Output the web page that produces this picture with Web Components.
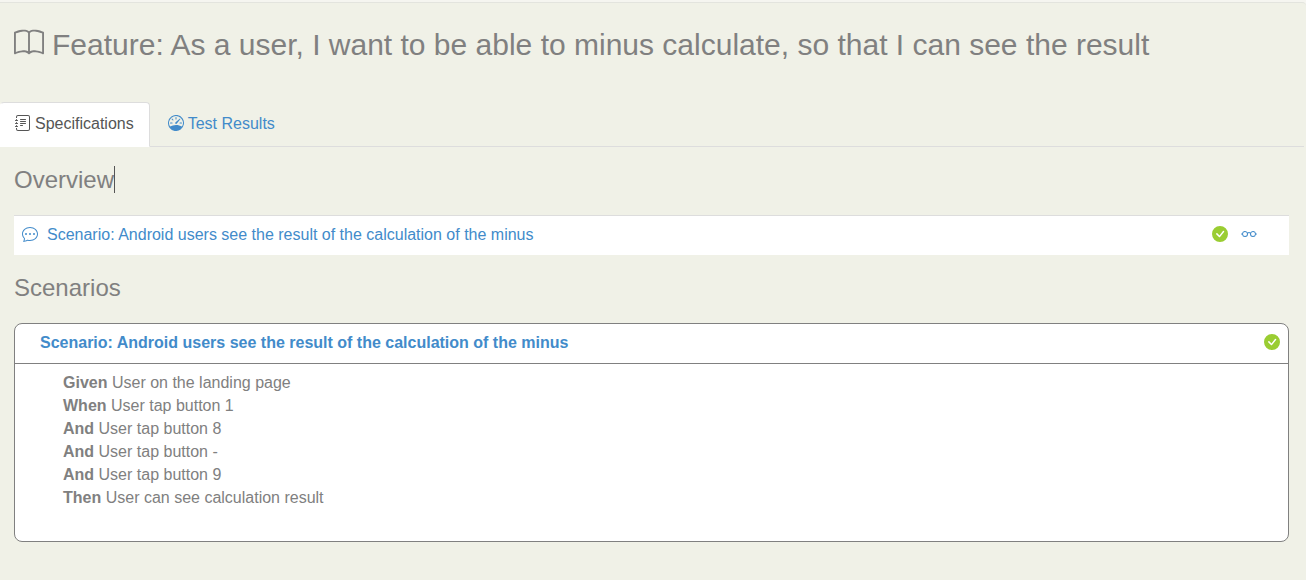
<!DOCTYPE html>
<html lang="en">
<head>
<meta charset="utf-8">
<meta name="viewport" content="width=device-width, initial-scale=1">
<title>Feature report</title>
<style>
  :root {
    --page: #f0f1e7;
    --line: #dddddd;
    --ink: #808080;
    --link: #428bca;
    --pass: #9acd32;
  }
  html { background: #f5f5f0; }
  body {
    margin: 0;
    padding-top: 2px;
    color: var(--ink);
    font: 16px/23px "Liberation Sans", Arial, sans-serif;
  }
</style>
</head>
<body>
<feature-report></feature-report>

<script>
const ICONS = {
  book: '<path d="M1 2.828c.885-.37 2.154-.769 3.388-.893 1.33-.134 2.458.063 3.112.752v9.746c-.935-.53-2.12-.603-3.213-.493-1.18.12-2.37.461-3.287.811V2.828zm7.5-.141c.654-.689 1.782-.886 3.112-.752 1.234.124 2.503.523 3.388.893v9.923c-.918-.35-2.107-.692-3.287-.81-1.094-.111-2.278-.039-3.213.492V2.687zM8 1.783C7.015.936 5.587.81 4.287.94c-1.514.153-3.042.672-3.994 1.105A.5.5 0 0 0 0 2.5v11a.5.5 0 0 0 .707.455c.882-.4 2.303-.881 3.68-1.02 1.409-.142 2.59.087 3.223.877a.5.5 0 0 0 .78 0c.633-.79 1.814-1.019 3.222-.877 1.378.139 2.8.62 3.681 1.02A.5.5 0 0 0 16 13.5v-11a.5.5 0 0 0-.293-.455c-.952-.433-2.48-.952-3.994-1.105C10.413.809 8.985.936 8 1.783z"/>',
  journal: '<path d="M5 10.5a.5.5 0 0 1 .5-.5h2a.5.5 0 0 1 0 1h-2a.5.5 0 0 1-.5-.5m0-2a.5.5 0 0 1 .5-.5h5a.5.5 0 0 1 0 1h-5a.5.5 0 0 1-.5-.5m0-2a.5.5 0 0 1 .5-.5h5a.5.5 0 0 1 0 1h-5a.5.5 0 0 1-.5-.5m0-2a.5.5 0 0 1 .5-.5h5a.5.5 0 0 1 0 1h-5a.5.5 0 0 1-.5-.5"/><path d="M3 0h10a2 2 0 0 1 2 2v12a2 2 0 0 1-2 2H3a2 2 0 0 1-2-2v-1h1v1a1 1 0 0 0 1 1h10a1 1 0 0 0 1-1V2a1 1 0 0 0-1-1H3a1 1 0 0 0-1 1v1H1V2a2 2 0 0 1 2-2"/><path d="M1 5v-.5a.5.5 0 0 1 1 0V5h.5a.5.5 0 0 1 0 1h-2a.5.5 0 0 1 0-1zm0 3v-.5a.5.5 0 0 1 1 0V8h.5a.5.5 0 0 1 0 1h-2a.5.5 0 0 1 0-1zm0 3v-.5a.5.5 0 0 1 1 0v.5h.5a.5.5 0 0 1 0 1h-2a.5.5 0 0 1 0-1z"/>',
  gauge: '<path d="M8 2a.5.5 0 0 1 .5.5V4a.5.5 0 0 1-1 0V2.5A.5.5 0 0 1 8 2M3.732 3.732a.5.5 0 0 1 .707 0l.915.914a.5.5 0 1 1-.708.708l-.914-.915a.5.5 0 0 1 0-.707M2 8a.5.5 0 0 1 .5-.5h1.586a.5.5 0 0 1 0 1H2.5A.5.5 0 0 1 2 8m9.5 0a.5.5 0 0 1 .5-.5h1.5a.5.5 0 0 1 0 1H12a.5.5 0 0 1-.5-.5m.754-4.246a.39.39 0 0 0-.527-.02L7.547 7.31A.91.91 0 1 0 8.85 8.569l3.434-4.297a.39.39 0 0 0-.029-.518z"/><path fill-rule="evenodd" d="M6.664 15.889A8 8 0 1 1 9.336.11a8 8 0 0 1-2.672 15.78zm-4.665-4.283A11.95 11.95 0 0 1 8 10c2.186 0 4.236.585 6.001 1.606a7 7 0 1 0-12.002 0"/>',
  chat: '<path d="M5 8a1 1 0 1 1-2 0 1 1 0 0 1 2 0m4 0a1 1 0 1 1-2 0 1 1 0 0 1 2 0m3 1a1 1 0 1 0 0-2 1 1 0 0 0 0 2"/><path d="m2.165 15.803.02-.004c1.83-.363 2.948-.842 3.468-1.105A9 9 0 0 0 8 15c4.418 0 8-3.134 8-7s-3.582-7-8-7-8 3.134-8 7c0 1.76.743 3.37 1.97 4.6a10.4 10.4 0 0 1-.524 2.318l-.003.011a11 11 0 0 1-.244.637c-.079.186.074.394.273.362a22 22 0 0 0 .693-.125m.8-3.108a1 1 0 0 0-.287-.801C1.618 10.83 1 9.468 1 8c0-3.192 3.004-6 7-6s7 2.808 7 6-3.004 6-7 6a8 8 0 0 1-2.088-.272 1 1 0 0 0-.711.074c-.387.196-1.24.57-2.634.893a11 11 0 0 0 .398-2"/>',
  check: '<path d="M16 8A8 8 0 1 1 0 8a8 8 0 0 1 16 0m-3.97-3.03a.75.75 0 0 0-1.08.022L7.477 9.417 5.384 7.323a.75.75 0 0 0-1.06 1.06L6.97 11.03a.75.75 0 0 0 1.079-.02l3.992-4.99a.75.75 0 0 0-.01-1.05z"/>',
  glasses: '<path d="M4 6a2 2 0 1 1 0 4 2 2 0 0 1 0-4m2.625.547a3 3 0 0 0-5.584.953H.5a.5.5 0 0 0 0 1h.541A3 3 0 0 0 7 8a1 1 0 0 1 2 0 3 3 0 0 0 5.959.5h.541a.5.5 0 0 0 0-1h-.541a3 3 0 0 0-5.584-.953A2 2 0 0 0 8 6c-.532 0-1.016.208-1.375.547M14 8a2 2 0 1 1-4 0 2 2 0 0 1 4 0"/>'
};

class AppIcon extends HTMLElement {
  connectedCallback() {
    if (this.shadowRoot) return;
    this.attachShadow({ mode: "open" }).innerHTML = `
      <style>
        :host { display: block; flex: none; width: 16px; height: 16px; padding-top: 3px; }
        svg { display: block; width: 100%; height: 100%; fill: currentColor; }
      </style>
      <svg viewBox="0 0 16 16" aria-hidden="true">${ICONS[this.getAttribute("name")]}</svg>`;
  }
}

class FeatureTitle extends HTMLElement {
  connectedCallback() {
    this.attachShadow({ mode: "open" }).innerHTML = `
      <style>
        :host { display: block; padding: 24px 14px 40px; }
        h1 { display: flex; gap: 8px; margin: 0; font-size: 30px; line-height: 35px; font-weight: 400; }
        app-icon { width: 30px; height: 30px; padding-top: 1px; }
      </style>
      <h1><app-icon name="book"></app-icon><span><slot></slot></span></h1>`;
  }
}

class TabBar extends HTMLElement {
  connectedCallback() {
    this.attachShadow({ mode: "open" }).innerHTML = `
      <style>
        :host { display: block; margin-right: 2px; border-bottom: 1px solid var(--line); }
        nav { display: flex; gap: 2px; margin-bottom: -1px; }
      </style>
      <nav aria-label="Report sections"><slot></slot></nav>`;
  }
}

class TabLink extends HTMLElement {
  connectedCallback() {
    this.attachShadow({ mode: "open" }).innerHTML = `
      <style>
        :host { display: block; }
        a {
          display: flex; align-items: flex-start; gap: 4px; padding: 9px 15px 11px;
          border: 1px solid transparent; border-radius: 4px 4px 0 0;
          color: var(--link); text-decoration: none;
        }
        :host([active]) a {
          padding-left: 14px; background: #fff; color: #555;
          border-color: var(--line); border-bottom-color: #fff; border-left-color: #fff;
        }
      </style>
      <a href="${this.getAttribute("href")}"><app-icon name="${this.getAttribute("icon")}"></app-icon><span><slot></slot></span></a>`;
  }
}

class SectionHeading extends HTMLElement {
  connectedCallback() {
    this.attachShadow({ mode: "open" }).innerHTML = `
      <style>
        :host { display: block; }
        h2 { display: flex; margin: 0; font-size: 24px; line-height: 27px; font-weight: 400; }
        :host([caret]) h2::after { content: ""; width: 1px; background: #555; }
      </style>
      <h2><slot></slot></h2>`;
  }
}

class ScenarioOverview extends HTMLElement {
  connectedCallback() {
    this.attachShadow({ mode: "open" }).innerHTML = `
      <style>
        :host { display: block; }
        table { width: 100%; border-collapse: collapse; background: #fff; }
        td { padding: 7px 8px 9px; border-top: 1px solid var(--line); }
        .actions { width: 69px; }
        .row { display: flex; align-items: flex-start; gap: 9px; min-height: 23px; }
        .actions .row { gap: 13px; }
        a { color: var(--link); text-decoration: none; }
        .pass { color: var(--pass); }
      </style>
      <table>
        <tr>
          <td><a class="row" href="#scenario"><app-icon name="chat"></app-icon><span><slot></slot></span></a></td>
          <td class="actions"><div class="row">
            <app-icon class="pass" name="check" role="img" aria-label="Passed"></app-icon>
            <a href="#evidence" aria-label="View details"><app-icon name="glasses"></app-icon></a>
          </div></td>
        </tr>
      </table>`;
  }
}

class ScenarioCard extends HTMLElement {
  connectedCallback() {
    this.attachShadow({ mode: "open" }).innerHTML = `
      <style>
        :host { display: block; background: #fff; border: 1px solid var(--ink); border-radius: 8px; }
        header {
          display: flex; align-items: flex-start; justify-content: space-between;
          padding: 7px 8px 9px 25px; border-bottom: 1px solid var(--ink);
        }
        h3 { margin: 0; font-size: 16px; line-height: 23px; }
        a { color: var(--link); text-decoration: none; }
        app-icon { color: var(--pass); }
        .steps { padding: 7px 48px 32px; }
      </style>
      <header>
        <h3><a href="#scenario-detail"><slot name="title"></slot></a></h3>
        <app-icon name="check" role="img" aria-label="Passed"></app-icon>
      </header>
      <div class="steps"><slot></slot></div>`;
  }
}

class ScenarioStep extends HTMLElement {
  connectedCallback() {
    this.attachShadow({ mode: "open" }).innerHTML = `
      <style>:host { display: block; }</style>
      <b>${this.getAttribute("keyword")}</b> <slot></slot>`;
  }
}

class FeatureReport extends HTMLElement {
  connectedCallback() {
    this.attachShadow({ mode: "open" }).innerHTML = `
      <style>
        :host {
          display: block; box-sizing: border-box; min-height: calc(100vh - 2px);
          background: var(--page); border-top: 1px solid #e3e4de; border-top-right-radius: 4px;
        }
        main { display: flex; flex-direction: column; padding: 19px 17px 38px 14px; }
        scenario-overview { margin: 22px 0 19px; }
        scenario-card { margin-top: 22px; }
      </style>
      <feature-title>Feature: As a user, I want to be able to minus calculate, so that I can see the result</feature-title>
      <tab-bar>
        <tab-link active icon="journal" href="#specifications">Specifications</tab-link>
        <tab-link icon="gauge" href="#results">Test Results</tab-link>
      </tab-bar>
      <main>
        <section-heading caret>Overview</section-heading>
        <scenario-overview>Scenario: Android users see the result of the calculation of the minus</scenario-overview>
        <section-heading>Scenarios</section-heading>
        <scenario-card>
          <span slot="title">Scenario: Android users see the result of the calculation of the minus</span>
          <scenario-step keyword="Given">User on the landing page</scenario-step>
          <scenario-step keyword="When">User tap button 1</scenario-step>
          <scenario-step keyword="And">User tap button 8</scenario-step>
          <scenario-step keyword="And">User tap button -</scenario-step>
          <scenario-step keyword="And">User tap button 9</scenario-step>
          <scenario-step keyword="Then">User can see calculation result</scenario-step>
        </scenario-card>
      </main>`;
  }
}

customElements.define("app-icon", AppIcon);
customElements.define("feature-title", FeatureTitle);
customElements.define("tab-bar", TabBar);
customElements.define("tab-link", TabLink);
customElements.define("section-heading", SectionHeading);
customElements.define("scenario-overview", ScenarioOverview);
customElements.define("scenario-card", ScenarioCard);
customElements.define("scenario-step", ScenarioStep);
customElements.define("feature-report", FeatureReport);
</script>
</body>
</html>
